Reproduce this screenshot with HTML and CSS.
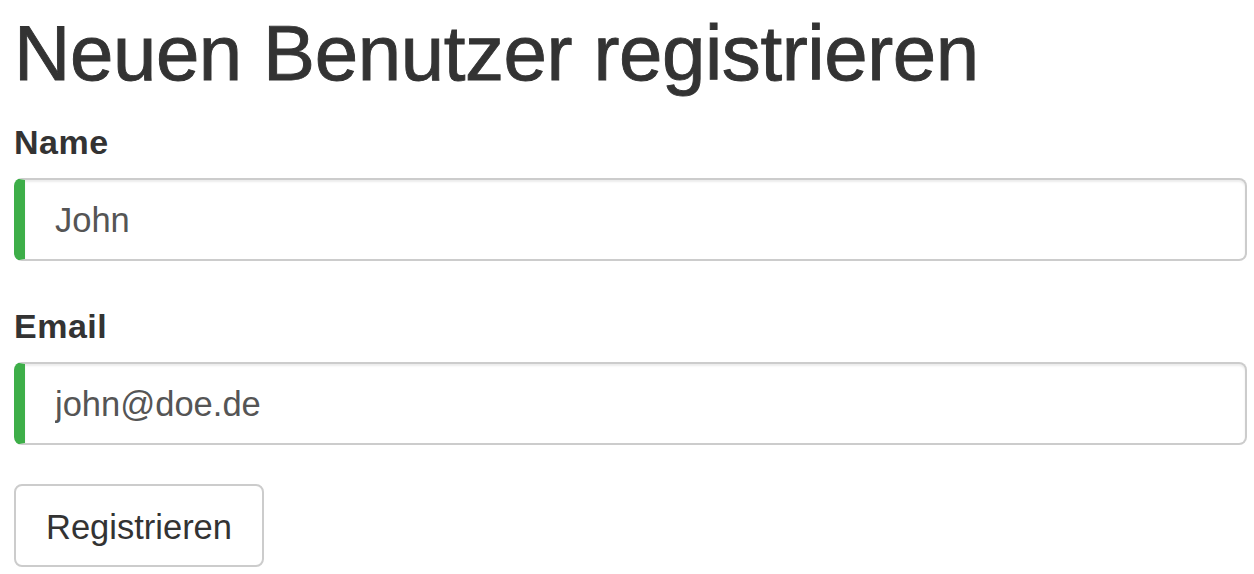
FILE: index.html
```html
<!DOCTYPE html>
<html lang="de">
<head>
<meta charset="utf-8">
<title>Neuen Benutzer registrieren</title>
<link rel="stylesheet" href="styles.css">
</head>
<body>
<div class="page">
  <h1 class="title">Neuen Benutzer registrieren</h1>
  <form class="form">
    <div class="group">
      <label class="label" for="name">Name</label>
      <input class="field valid" id="name" type="text" value="John">
    </div>
    <div class="group">
      <label class="label" for="email">Email</label>
      <input class="field valid" id="email" type="email" value="john@doe.de">
    </div>
    <button class="btn" type="button">Registrieren</button>
  </form>
</div>
</body>
</html>
```
FILE: styles.css
```css
html, body {
  margin: 0;
  padding: 0;
  background: #fff;
}
body {
  font-family: "Liberation Sans", Arial, sans-serif;
  color: #333;
}
.page {
  padding: 0 7px 0 14px;
}
.title {
  margin: 10px 0 0 0;
  font-size: 78px;
  line-height: 86px;
  font-weight: 400;
  color: #333;
  letter-spacing: -0.4px;
  -webkit-text-stroke: 0.9px #333;
}
.form {
  display: flex;
  flex-direction: column;
  margin-top: 26px;
}
.group {
  display: flex;
  flex-direction: column;
  margin-bottom: 39px;
}
.group + .group {
  margin-top: 6px;
}
.label {
  font-size: 34px;
  font-weight: 700;
  line-height: 40px;
  letter-spacing: 0.5px;
  margin-bottom: 16px;
}
.field {
  box-sizing: border-box;
  height: 83px;
  width: 100%;
  padding: 2px 28px 0 30px;
  font-family: "Liberation Sans", Arial, sans-serif;
  font-size: 34.5px;
  color: #555;
  background: #fff;
  border: 2px solid #ccc;
  border-radius: 8px;
  box-shadow: inset 0 2px 2px rgba(0, 0, 0, 0.075);
  outline: none;
}
.field.valid {
  border-left: 11px solid #3dae48;
}
.btn {
  align-self: flex-start;
  box-sizing: border-box;
  height: 83px;
  padding: 4px 30px 0 30px;
  font-family: "Liberation Sans", Arial, sans-serif;
  font-size: 34.5px;
  color: #333;
  background: #fff;
  border: 2px solid #ccc;
  border-radius: 8px;
}
```
